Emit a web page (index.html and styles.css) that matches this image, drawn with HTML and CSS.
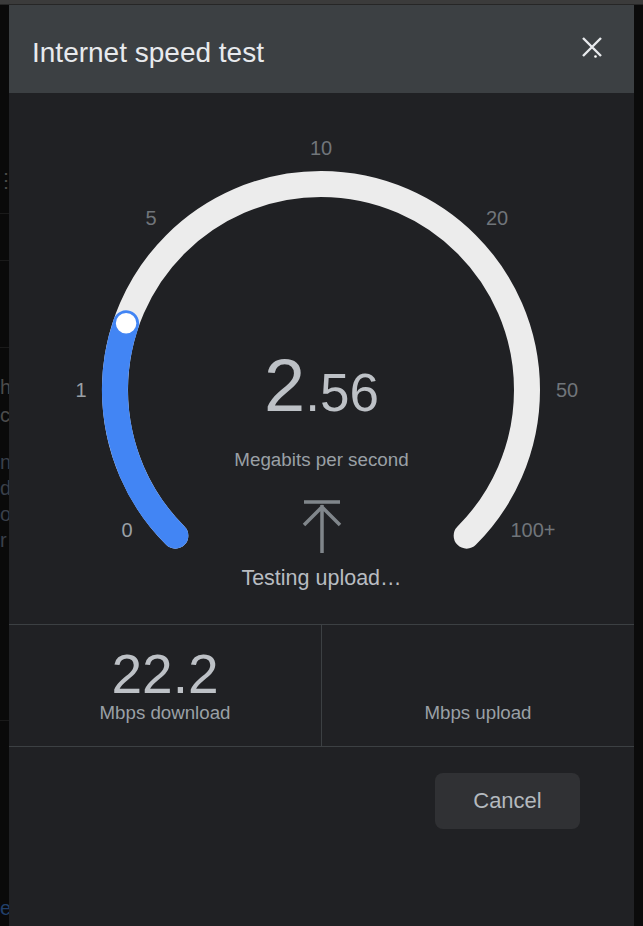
FILE: index.html
```html
<!DOCTYPE html>
<html lang="en">
<head>
<meta charset="utf-8">
<title>Internet speed test</title>
<link rel="stylesheet" href="styles.css">
</head>
<body>
<div class="topbar"></div>
<div class="main">
  <div class="page-left">
    <div class="bg-gap g-icon"></div>
    <div class="bg-icon">⋮</div>
    <div class="bg-gap g-a"></div>
    <div class="bg-line"></div>
    <div class="bg-gap g-b"></div>
    <div class="bg-line"></div>
    <div class="bg-gap g-c"></div>
    <div class="bg-line"></div>
    <div class="bg-gap g-d"></div>
    <div class="bg-text grey">h</div>
    <div class="bg-text grey">c</div>
    <div class="bg-gap g-e"></div>
    <div class="bg-text tight blueish">n</div>
    <div class="bg-text tight blueish">d</div>
    <div class="bg-text tight blueish">o</div>
    <div class="bg-text tight blueish">r</div>
    <div class="bg-gap g-f"></div>
    <div class="bg-line"></div>
    <div class="bg-gap g-g"></div>
    <div class="bg-text link">e</div>
  </div>

  <div class="dialog">
    <div class="header">
      <h1 class="title">Internet speed test</h1>
      <svg class="close" viewBox="0 0 20 20" aria-label="Close">
        <path d="M1 1 L19 19 M19 1 L1 19" stroke="#e8eaed" stroke-width="2.4" fill="none"/>
        <circle cx="13.5" cy="19.5" r="1.3" fill="#ffffff"/>
      </svg>
    </div>

    <div class="gauge">
      <svg class="dial" width="625" height="531" viewBox="0 0 625 531">
        <path d="M166.34 442.66 A206 206 0 1 1 457.66 442.66" stroke="#ececec" stroke-width="26" fill="none" stroke-linecap="round"/>
        <path d="M166.34 442.66 A206 206 0 0 1 117.1 230.3" stroke="#4285f4" stroke-width="26" fill="none" stroke-linecap="round"/>
        <circle cx="117.1" cy="230.3" r="11" fill="#ffffff" stroke="#4285f4" stroke-width="1.5"/>
        <g class="ticks" font-size="20" text-anchor="middle">
          <text x="118" y="444" class="tick-on">0</text>
          <text x="72" y="304" class="tick-on">1</text>
          <text x="142" y="132" class="tick">5</text>
          <text x="312" y="62" class="tick">10</text>
          <text x="488" y="132" class="tick">20</text>
          <text x="558" y="304" class="tick">50</text>
          <text x="524" y="444" class="tick">100+</text>
        </g>
      </svg>
      <div class="readout">
        <div class="value">2<span class="frac">.56</span></div>
        <div class="unit">Megabits per second</div>
        <svg class="arrow" viewBox="0 0 40 56" aria-hidden="true">
          <path d="M2 4 H38 M20 7 V55 M2 27 L20 9 L38 27" stroke="#80868b" stroke-width="3.5" fill="none"/>
        </svg>
        <div class="status">Testing upload…</div>
      </div>
    </div>

    <div class="stats">
      <div class="stat">
        <div class="num">22.2</div>
        <div class="label">Mbps download</div>
      </div>
      <div class="stat">
        <div class="num"></div>
        <div class="label">Mbps upload</div>
      </div>
    </div>

    <div class="footer">
      <button class="cancel">Cancel</button>
    </div>
  </div>

  <div class="page-right"></div>
</div>
</body>
</html>
```

FILE: styles.css
```css
* {
  box-sizing: border-box;
  margin: 0;
  padding: 0;
}

html, body {
  width: 643px;
  height: 926px;
  overflow: hidden;
  background: #0a0a0a;
  font-family: "Liberation Sans", Arial, sans-serif;
}

.topbar {
  height: 5px;
  background: #3b3b3b;
  border-bottom: 1px solid #262626;
}

.main {
  display: flex;
  height: 921px;
}

/* dimmed page behind the dialog */
.page-left {
  width: 9px;
  overflow: hidden;
  background: #0a0a0a;
  display: flex;
  flex-direction: column;
  white-space: nowrap;
}

.bg-gap { flex: none; }
.g-icon { height: 165px; }
.g-a { height: 23px; }
.g-b { height: 46px; }
.g-c { height: 86px; }
.g-d { height: 25px; }
.g-e { height: 20px; }
.g-f { height: 167px; }
.g-g { height: 173px; }

.bg-icon {
  height: 20px;
  line-height: 20px;
  font-size: 20px;
  color: #4a4a4a;
  margin-left: -4px;
}

.bg-line {
  height: 1px;
  flex: none;
  background: #1a1a1a;
}

.bg-text {
  height: 28px;
  line-height: 28px;
  font-size: 20px;
  flex: none;
}

.bg-text.tight {
  height: 26px;
  line-height: 26px;
}

.grey { color: #4c4c4c; }
.blueish { color: #3a404b; }
.link { color: #22406a; }

.page-right {
  flex: 1;
  background: #0b0b0b;
}

/* dialog */
.dialog {
  width: 625px;
  flex: none;
  background: #202124;
  display: flex;
  flex-direction: column;
}

.header {
  height: 88px;
  flex: none;
  background: #3c4043;
  display: flex;
  justify-content: space-between;
  align-items: flex-start;
  padding: 0 32px 0 23px;
}

.title {
  margin-top: 34px;
  font-size: 28px;
  line-height: 28px;
  font-weight: normal;
  color: #e8eaed;
}

.close {
  margin-top: 32px;
  width: 20px;
  height: 20px;
  overflow: visible;
}

.gauge {
  position: relative;
  height: 531px;
  flex: none;
}

.dial {
  position: absolute;
  left: 0;
  top: 0;
}

.ticks {
  font-family: "Liberation Sans", Arial, sans-serif;
}

.tick { fill: #70757a; }
.tick-on { fill: #9aa0a6; }

.readout {
  position: relative;
  display: flex;
  flex-direction: column;
  align-items: center;
  padding-top: 256px;
}

.value {
  font-size: 74px;
  line-height: 74px;
  color: #bdc1c6;
}

.frac {
  font-size: 53px;
  line-height: 53px;
}

.unit {
  margin-top: 27px;
  font-size: 18.8px;
  line-height: 20px;
  color: #9aa0a6;
}

.arrow {
  display: block;
  margin-top: 28px;
  width: 40px;
  height: 56px;
}

.status {
  margin-top: 12px;
  font-size: 21.5px;
  line-height: 24px;
  color: #b8bcc1;
}

.stats {
  display: flex;
  height: 123px;
  flex: none;
  border-top: 1px solid #3c4043;
  border-bottom: 1px solid #3c4043;
}

.stat {
  flex: 1;
  display: flex;
  flex-direction: column;
  align-items: center;
  padding-top: 22px;
}

.stat + .stat {
  border-left: 1px solid #3c4043;
}

.num {
  height: 55px;
  font-size: 55px;
  line-height: 55px;
  color: #bdc1c6;
}

.label {
  margin-top: 1px;
  font-size: 18.7px;
  line-height: 20px;
  color: #9aa0a6;
}

.footer {
  display: flex;
  justify-content: flex-end;
  padding: 26px 54px 0 0;
}

.cancel {
  width: 145px;
  height: 56px;
  border: none;
  border-radius: 8px;
  background: #303134;
  color: #b4b9be;
  font-family: "Liberation Sans", Arial, sans-serif;
  font-size: 22px;
  display: flex;
  align-items: center;
  justify-content: center;
}
```
